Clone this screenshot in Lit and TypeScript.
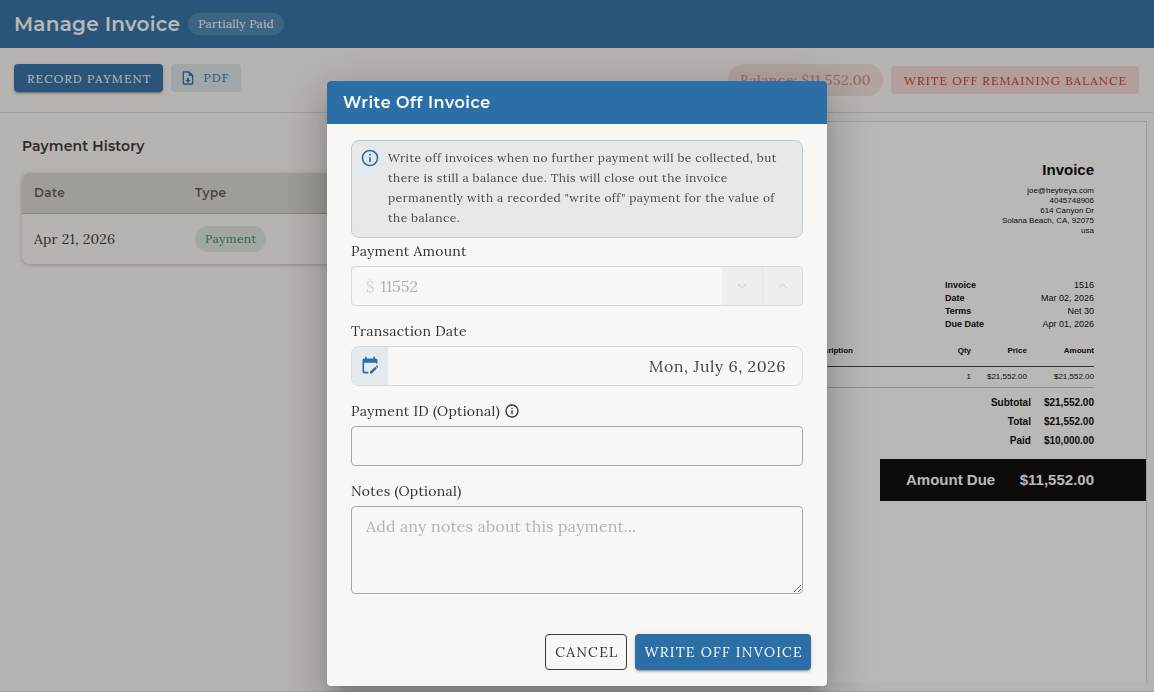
import { LitElement, html, css, svg } from "lit";
import { customElement } from "lit/decorators.js";

const ICONS = {
  info: "M11,9H13V7H11M12,20C7.59,20 4,16.41 4,12C4,7.59 7.59,4 12,4C16.41,4 20,7.59 20,12C20,16.41 16.41,20 12,20M12,2A10,10 0 0,0 2,12A10,10 0 0,0 12,22A10,10 0 0,0 22,12A10,10 0 0,0 12,2M11,17H13V11H11V17Z",
  file: "M14,2L20,8V20A2,2 0 0,1 18,22H6A2,2 0 0,1 4,20V4A2,2 0 0,1 6,2H14M18,20V9H13V4H6V20H18M12,19L8,15H10.5V12H13.5V15H16L12,19Z",
  calendar:
    "M19,3H18V1H16V3H8V1H6V3H5A2,2 0 0,0 3,5V19A2,2 0 0,0 5,21H10V19H5V8H19V9H21V5A2,2 0 0,0 19,3M21.7,13.35L20.7,14.35L18.65,12.35L19.65,11.35C19.85,11.14 20.19,11.13 20.42,11.35L21.7,12.63C21.89,12.83 21.89,13.15 21.7,13.35M12,18.94L18.07,12.88L20.07,14.88L14.06,21H12V18.94Z",
  down: "M7.41,8.58L12,13.17L16.59,8.58L18,10L12,16L6,10L7.41,8.58Z",
  up: "M7.41,15.41L12,10.83L16.59,15.41L18,14L12,8L6,14L7.41,15.41Z",
};

const icon = (name: keyof typeof ICONS, size: number) =>
  html`<svg width=${size} height=${size} viewBox="0 0 24 24" aria-hidden="true">${svg`<path fill="currentColor" d=${ICONS[name]} />`}</svg>`;

const base = css`
  :host {
    --serif: "Lora", "Liberation Serif", serif;
    --sans: "Montserrat", "Inter", sans-serif;
    --blue: #2c6ea6;
    --ink: #33302d;
    font-family: var(--serif);
    color: var(--ink);
  }
  * {
    box-sizing: border-box;
  }
  svg {
    display: block;
    flex: none;
  }
  h1, h2, h3, p {
    margin: 0;
  }
  button, input, textarea {
    font-family: inherit;
    color: inherit;
    margin: 0;
  }
  button {
    text-transform: uppercase;
    border: 0;
    border-radius: 4px;
    letter-spacing: 0.09em;
    white-space: nowrap;
  }
`;

@customElement("invoice-sheet")
export class InvoiceSheet extends LitElement {
  static styles = [
    base,
    css`
      :host {
        display: block;
        background: #fff;
        border: 1px solid #d9d9d7;
        border-bottom: 0;
        padding-top: 39px;
        font-family: "Liberation Sans", sans-serif;
        color: #000;
        font-size: 9px;
      }
      .inner {
        padding: 0 52px;
        text-align: right;
      }
      h2 {
        font-size: 15px;
        line-height: 18px;
        margin-bottom: 7px;
      }
      address {
        font-style: normal;
        font-size: 8px;
        line-height: 10px;
      }
      .meta {
        width: 149px;
        margin: 43px 0 5px auto;
        border-collapse: collapse;
        line-height: 13px;
      }
      .meta th {
        text-align: left;
      }
      th, td {
        padding: 0;
      }
      .items {
        width: 100%;
        border-collapse: collapse;
        font-size: 8px;
      }
      .items th {
        height: 30px;
        border-bottom: 1px solid #3a3a3a;
        text-align: right;
      }
      .items td {
        height: 21px;
        border-bottom: 1px solid #c4c4c4;
      }
      .items th:first-child {
        text-align: left;
        padding-left: 171px;
      }
      .price {
        width: 56px;
      }
      .amount {
        width: 67px;
      }
      .totals {
        display: grid;
        grid-template-columns: 1fr auto;
        column-gap: 13px;
        margin: 5px 0 9px;
        font-size: 10px;
        line-height: 19px;
        font-weight: 700;
      }
      .due {
        display: flex;
        justify-content: space-between;
        align-items: center;
        margin-left: auto;
        width: 266px;
        height: 42px;
        padding: 0 52px 0 26px;
        background: #000;
        color: #fff;
        font-size: 15px;
        font-weight: 700;
      }
    `,
  ];

  render() {
    return html`
      <div class="inner">
        <h2>Invoice</h2>
        <address>joe@heytreya.com<br />4045748906<br />614 Canyon Dr<br />Solana Beach, CA, 92075<br />usa</address>
        <table class="meta">
          <tr><th>Invoice</th><td>1516</td></tr>
          <tr><th>Date</th><td>Mar 02, 2026</td></tr>
          <tr><th>Terms</th><td>Net 30</td></tr>
          <tr><th>Due Date</th><td>Apr 01, 2026</td></tr>
        </table>
        <table class="items">
          <thead>
            <tr><th>Description</th><th>Qty</th><th class="price">Price</th><th class="amount">Amount</th></tr>
          </thead>
          <tbody>
            <tr><td></td><td>1</td><td>$21,552.00</td><td>$21,552.00</td></tr>
          </tbody>
        </table>
        <div class="totals">
          <span>Subtotal</span><span>$21,552.00</span>
          <span>Total</span><span>$21,552.00</span>
          <span>Paid</span><span>$10,000.00</span>
        </div>
      </div>
      <div class="due"><span>Amount Due</span><span>$11,552.00</span></div>
    `;
  }
}

@customElement("write-off-dialog")
export class WriteOffDialog extends LitElement {
  static styles = [
    base,
    css`
      :host {
        display: block;
        width: 500px;
        max-width: 100%;
        background: #f9f7f3;
        border-radius: 4px;
        overflow: hidden;
        box-shadow: 0 11px 15px -7px rgba(0, 0, 0, 0.2), 0 24px 38px 3px rgba(0, 0, 0, 0.14),
          0 9px 46px 8px rgba(0, 0, 0, 0.12);
      }
      h2 {
        background: var(--blue);
        color: #fff;
        font: 600 16px/43px var(--sans);
        letter-spacing: 0.0333em;
        padding: 0 16px;
      }
      .body {
        padding: 16px 24px 0;
      }
      .alert {
        display: flex;
        gap: 8px;
        padding: 7px 8px 9px;
        margin-bottom: 3px;
        border: 1px solid #c3cbd0;
        border-radius: 8px;
        background: #e5e9ec;
        font-size: 12px;
        line-height: 20px;
        letter-spacing: 0.0333em;
        color: #4a4643;
      }
      .alert svg {
        color: var(--blue);
      }
      .field {
        margin-bottom: 15px;
      }
      label {
        display: flex;
        align-items: center;
        gap: 4px;
        font-size: 14px;
        line-height: 20px;
        letter-spacing: 0.0178em;
        margin-bottom: 5px;
      }
      .box {
        display: flex;
        align-items: center;
        height: 40px;
        border: 1px solid #d9d8d4;
        border-radius: 4px;
        overflow: hidden;
      }
      .box.strong, textarea {
        border: 1px solid #aaa9a5;
      }
      .box.round {
        border-radius: 8px;
      }
      input {
        flex: 1;
        min-width: 0;
        height: 100%;
        border: 0;
        outline: 0;
        background: transparent;
        font-size: 16px;
        padding: 0 16px;
      }
      .prefix {
        padding-left: 14px;
        font-size: 16px;
        color: #d5d4d0;
      }
      .amount {
        padding: 0 6px;
        color: #b3b1ae;
        -webkit-text-fill-color: #b3b1ae;
      }
      .step {
        display: grid;
        place-items: center;
        width: 40px;
        height: 100%;
        padding: 0;
        border-radius: 0;
        background: #efeeea;
        color: #dbdad6;
      }
      .step + .step {
        border-left: 1px solid #e6e5e1;
      }
      .cal {
        display: grid;
        place-items: center;
        width: 36px;
        height: 100%;
        background: #e3e9ec;
        color: var(--blue);
      }
      .date {
        text-align: right;
        letter-spacing: 0.0333em;
        color: #4a4643;
      }
      textarea {
        display: block;
        width: 100%;
        height: 88px;
        border-radius: 4px;
        outline: 0;
        background: transparent;
        padding: 7px 14px;
        font-size: 16px;
        line-height: 24px;
        letter-spacing: 0.0094em;
        resize: vertical;
      }
      textarea::placeholder {
        color: #b5b4b0;
      }
      .actions {
        display: flex;
        justify-content: flex-end;
        gap: 8px;
        padding: 25px 16px 16px;
      }
      .actions button {
        height: 36px;
        padding: 0 8px 0 9px;
        font-size: 14px;
      }
      .cancel {
        background: transparent;
        border: 1px solid #3d3a37;
      }
      .confirm {
        background: var(--blue);
        color: #fff;
        box-shadow: 0 3px 1px -2px rgba(0, 0, 0, 0.2), 0 2px 2px rgba(0, 0, 0, 0.14), 0 1px 5px rgba(0, 0, 0, 0.12);
      }
    `,
  ];

  render() {
    return html`
      <h2>Write Off Invoice</h2>
      <div class="body">
        <div class="alert">
          ${icon("info", 20)}
          <p>
            Write off invoices when no further payment will be collected, but there is still a balance due. This will
            close out the invoice permanently with a recorded "write off" payment for the value of the balance.
          </p>
        </div>
        <div class="field">
          <label for="amount">Payment Amount</label>
          <div class="box">
            <span class="prefix">$</span>
            <input id="amount" class="amount" value="11552" disabled />
            <button class="step" disabled aria-label="Decrease">${icon("down", 18)}</button>
            <button class="step" disabled aria-label="Increase">${icon("up", 18)}</button>
          </div>
        </div>
        <div class="field">
          <label for="date">Transaction Date</label>
          <div class="box round">
            <span class="cal">${icon("calendar", 20)}</span>
            <input id="date" class="date" value="Mon, July 6, 2026" readonly />
          </div>
        </div>
        <div class="field">
          <label for="pid">Payment ID (Optional) ${icon("info", 16)}</label>
          <div class="box strong"><input id="pid" /></div>
        </div>
        <div class="field">
          <label for="notes">Notes (Optional)</label>
          <textarea id="notes" placeholder="Add any notes about this payment..."></textarea>
        </div>
      </div>
      <div class="actions">
        <button class="cancel">Cancel</button>
        <button class="confirm">Write Off Invoice</button>
      </div>
    `;
  }
}

@customElement("app-root")
export class AppRoot extends LitElement {
  static styles = [
    base,
    css`
      :host {
        display: block;
      }
      .page {
        min-height: 100vh;
        display: flex;
        flex-direction: column;
        background: #fdf8f5;
      }
      header {
        display: flex;
        align-items: center;
        gap: 8px;
        height: 48px;
        padding: 0 14px;
        background: var(--blue);
        color: #fff;
      }
      h1 {
        font: 600 20px/32px var(--sans);
        letter-spacing: 0.0125em;
      }
      .chip {
        border-radius: 16px;
        padding: 0 10px;
        font-size: 12px;
        line-height: 22px;
        letter-spacing: 0.0178em;
        background: rgba(255, 255, 255, 0.15);
      }
      .toolbar {
        display: flex;
        gap: 8px;
        padding: 16px 14px;
        height: 65px;
        border-bottom: 1px solid #dfdbd8;
      }
      .toolbar button {
        display: flex;
        align-items: center;
        gap: 7px;
        height: 28px;
        padding: 0 12px 0 13px;
        font-size: 12px;
      }
      .record {
        background: var(--blue);
        color: #fff;
        box-shadow: 0 3px 1px -2px rgba(0, 0, 0, 0.2), 0 2px 2px rgba(0, 0, 0, 0.14), 0 1px 5px rgba(0, 0, 0, 0.12);
      }
      .toolbar .pdf {
        padding: 0 12px 1px 9px;
        background: #dce5e9;
        color: var(--blue);
      }
      .right {
        display: flex;
        align-items: center;
        gap: 8px;
        margin: 0 1px 0 auto;
      }
      .right .balance {
        padding: 0 12px;
        font-size: 14px;
        line-height: 32px;
        letter-spacing: 0.0333em;
        background: #f2e0dd;
        color: #c98680;
      }
      .writeoff {
        background: #f5d9d6;
        color: #cf2f2f;
      }
      .content {
        flex: 1;
        display: grid;
        grid-template-columns: 1fr 1fr;
        padding-bottom: 9px;
        border-bottom: 1px solid #dfdbd8;
      }
      .history {
        padding: 21px 8px 0 22px;
      }
      h3 {
        font: 600 14px/24px var(--sans);
        letter-spacing: 0.0094em;
      }
      .card {
        margin-top: 15px;
        border-radius: 8px;
        overflow: hidden;
        box-shadow: 0 1px 4px rgba(0, 0, 0, 0.25);
      }
      table {
        width: 100%;
        border-collapse: collapse;
        text-align: left;
      }
      th {
        height: 40px;
        padding: 0 12px;
        background: #dad6d0;
        border-bottom: 1px solid #b5b1ac;
        font: 600 12px/20px var(--sans);
        letter-spacing: 0.0333em;
        color: #5c5753;
      }
      th:first-child {
        width: 161px;
      }
      td {
        height: 51px;
        padding: 0 12px;
        font-size: 14px;
        letter-spacing: 0.0178em;
      }
      td .chip {
        display: inline-block;
        line-height: 26px;
        letter-spacing: 0.0333em;
        background: #dde7df;
        color: #2e8b57;
      }
      invoice-sheet {
        margin: 8px 7px 0 8px;
      }
      .scrim {
        position: fixed;
        inset: 0;
        display: flex;
        justify-content: center;
        align-items: flex-start;
        padding-top: 81px;
        background: rgba(38, 35, 32, 0.32);
      }
    `,
  ];

  render() {
    return html`
      <div class="page">
        <header>
          <h1>Manage Invoice</h1>
          <span class="chip">Partially Paid</span>
        </header>
        <div class="toolbar">
          <button class="record">Record Payment</button>
          <button class="pdf">${icon("file", 16)}PDF</button>
          <div class="right">
            <span class="chip balance">Balance: $11,552.00</span>
            <button class="writeoff">Write Off Remaining Balance</button>
          </div>
        </div>
        <div class="content">
          <section class="history">
            <h3>Payment History</h3>
            <div class="card">
              <table>
                <thead><tr><th>Date</th><th>Type</th></tr></thead>
                <tbody><tr><td>Apr 21, 2026</td><td><span class="chip">Payment</span></td></tr></tbody>
              </table>
            </div>
          </section>
          <invoice-sheet></invoice-sheet>
        </div>
      </div>
      <div class="scrim"><write-off-dialog role="dialog" aria-label="Write Off Invoice"></write-off-dialog></div>
    `;
  }
}
